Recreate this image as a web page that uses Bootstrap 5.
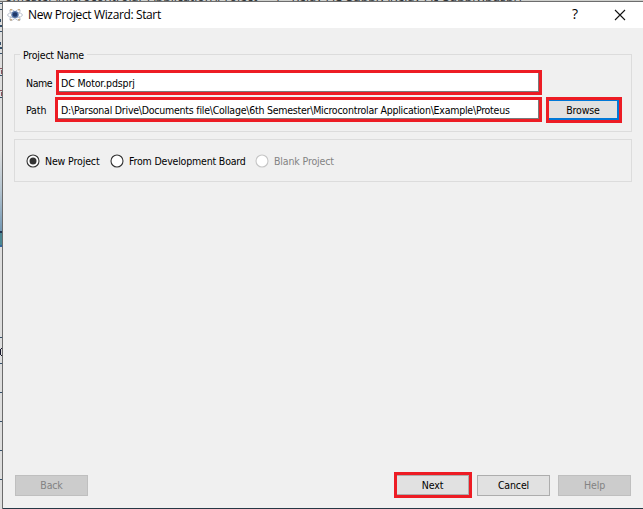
<!DOCTYPE html>
<html lang="en">
<head>
<meta charset="utf-8">
<meta name="viewport" content="width=device-width, initial-scale=1">
<title>New Project Wizard: Start</title>
<link href="https://cdn.jsdelivr.net/npm/bootstrap@5.3.0/dist/css/bootstrap.min.css" rel="stylesheet">
<style>
:root { --ui: "DejaVu Sans Condensed", "DejaVu Sans", sans-serif; --hl: #ed1c24; }
body { width: 643px; height: 509px; font: 10.5px/14px var(--ui); font-stretch: condensed; color: #000; background: #dedede; letter-spacing: -.13px; }
.backdrop-top { height: 2px; flex: none; background: #cfd0cd; border-bottom: 1px solid #6d6d6d; }
.backdrop-path { display: block; margin: -10px 0 0 5px; font: 12.4px/13px "Open Sans", sans-serif; letter-spacing: 0; color: #303438; word-spacing: 1px; }
.backdrop-left { width: 3px; flex: none; border-right: 1px solid #6b6b6b; }
.backdrop-left svg { display: block; }
.wizard { background: #f0f0f0; border-bottom: 1px solid #263845; min-width: 0; }
.titlebar { height: 26px; background: #fff; }
.title-icon { margin-left: 4px; }
.title-text { font: 12px/18px "Open Sans", sans-serif; letter-spacing: -.37px; margin-left: 5px; }
.title-help { font: 14px/18px "Open Sans", sans-serif; margin: -2px 36px 0 0; }
.title-close { margin-right: 17px; }
.group-frame { width: 618px; margin-left: 11px; border: 1px solid #dcdcdc; }
.group-name { margin-top: 26px; height: 78px; }
.group-kind { margin-top: 7px; height: 43px; padding-left: 11px; }
.group-caption { display: table; margin: -7px 0 0 5px; padding: 0 3px; background: #f0f0f0; letter-spacing: -.2px; }
.field-name { margin-top: 8px; height: 25px; }
.field-path { margin-top: 2px; height: 26px; }
.field-label { width: 41px; padding-left: 11px; flex: none; letter-spacing: -.4px; }
.path-label { width: 40px; letter-spacing: -.1px; }
.field-box { border: 3px solid var(--hl); background: #fff; height: 25px; width: 486px; line-height: 20px; padding-left: 2px; box-shadow: inset -1px -1px #7a7a7a; white-space: pre; overflow: hidden; }
.path-box { width: 487px; padding-left: 3px; letter-spacing: -.235px; }
.marked { border: 3px solid var(--hl); flex: none; }
.browse-mark { width: 76px; height: 26px; margin-left: 4px; }
.push { width: 73px; height: 21px; font: inherit; letter-spacing: inherit; line-height: 19px; padding: 0; border: 1px solid #adadad; border-radius: 0; background: #e1e1e1; color: #000; text-align: center; }
.push:disabled { background: #ccc; border-color: #bfbfbf; color: #838383; opacity: 1; }
.browse-mark .push { display: block; width: 70px; height: 20px; line-height: 18px; border-color: #0078d7; border-width: 1px 2px 2px 0; }
.next-mark { width: 78px; height: 26px; }
.next-mark .push { display: block; width: 72px; height: 20px; line-height: 18px; border-left: 0; }
.cancel-push { margin-left: 5px; }
.help-push { margin-left: 8px; }
.kind { white-space: nowrap; }
.kind svg { flex: none; margin-right: 5px; }
.kind-new { width: 84px; }
.kind-board { width: 145px; letter-spacing: -.18px; }
.kind-off { color: #838383; }
.footer-bar { height: 26px; margin: 0 12px 10px 12px; }
</style>
<script src="https://cdn.jsdelivr.net/npm/bootstrap@5.3.0/dist/js/bootstrap.bundle.min.js"></script>
</head>
<body class="d-flex flex-column overflow-hidden m-0">
<div class="backdrop-top overflow-hidden text-nowrap"><span class="backdrop-path">omester\Microcontrolar Application\Project &nbsp; &nbsp;\ &nbsp; Relay AC Supply\Relay Ac Supply.pdsprj</span></div>
<div class="d-flex flex-grow-1">
  <div class="backdrop-left overflow-hidden">
    <svg width="2" height="507" viewBox="0 2 2 507" shape-rendering="crispEdges">
      <defs><linearGradient id="sky" x1="0" y1="0" x2="0" y2="1"><stop offset="0" stop-color="#dedede"/><stop offset=".5" stop-color="#b4c4d0"/><stop offset="1" stop-color="#7398b4"/></linearGradient></defs>
      <path fill="#dedede" d="M0 2h2v507H0z"/>
      <path fill="#35506a" d="M0 3h2v1H0zM0 9h2v1H0zM0 19h1v3H0zM0 25h2v2H0zM0 31h2v1H0zM0 42h1v3H0zM0 47h2v2H0zM0 53h2v1H0z"/>
      <path fill="#8b5560" d="M0 68h2v1H0zM1 70h1v4H1zM0 90h2v1H0zM1 92h1v4H1z"/>
      <path fill="#35506a" d="M0 75h2v1H0zM0 97h2v1H0z"/>
      <path fill="url(#sky)" d="M0 150h2v81H0z"/>
      <path fill="#1f3552" d="M0 231h2v2H0z"/><path fill="#4b8793" d="M0 233h2v12H0z"/><path fill="#3567a0" d="M0 245h2v2H0z"/>
      <path fill="#35506a" d="M0 337h2v1H0zM0 363h2v1H0zM0 392h2v1H0zM0 421h2v1H0zM0 450h2v1H0zM0 479h2v1H0z"/>
      <path fill="#15152a" d="M1 348h1v1H1zM0 349h1v6H0zM1 355h1v1H1z"/>
    </svg>
  </div>
  <main class="wizard flex-grow-1 d-flex flex-column">
    <header class="titlebar d-flex align-items-center">
      <svg class="title-icon" width="16" height="14" viewBox="0 0 16 14">
        <g fill="none" stroke="#b4bccb" stroke-width=".9"><ellipse cx="8" cy="7" rx="7.4" ry="2.8"/><ellipse cx="8" cy="7" rx="7.2" ry="2.4" transform="rotate(48 8 7)"/><ellipse cx="8" cy="7" rx="7.2" ry="2.4" transform="rotate(-48 8 7)"/></g>
        <circle cx="8" cy="6.5" r="3.5" fill="#5474a8"/><circle cx="8" cy="6.5" r="2.3" fill="#1f3768"/>
        <path fill="#c9ab85" d="M3 1h2v1.5H3zM11 1h2v1.5h-2zM3 11h2v1.5H3zM11 11h2v1.5h-2z"/>
      </svg>
      <span class="title-text">New Project Wizard: Start</span>
      <span class="title-help ms-auto">?</span>
      <svg class="title-close" width="12" height="12" viewBox="0 0 12 12"><path d="M1 1l10 10M11 1L1 11" stroke="#111" stroke-width="1.1"/></svg>
    </header>
    <section class="group-frame group-name">
      <div class="group-caption"><span>Project Name</span></div>
      <div class="field-name d-flex align-items-center"><label class="field-label">Name</label><div class="field-box"><span>DC Motor.pdsprj</span></div></div>
      <div class="field-path d-flex"><label class="field-label path-label align-self-center">Path</label><div class="field-box path-box"><span>D:\Parsonal Drive\Documents file\Collage\6th Semester\Microcontrolar Application\Example\Proteus</span></div>
        <div class="marked browse-mark"><button class="push">Browse</button></div></div>
    </section>
    <section class="group-frame group-kind d-flex align-items-center">
      <label class="kind kind-new d-flex align-items-center"><svg width="14" height="14" viewBox="0 0 14 14"><circle cx="7" cy="7" r="6" fill="#fff" stroke="#333" stroke-width="1.1"/><circle cx="7" cy="7" r="3.5" fill="#333"/></svg><span>New Project</span></label>
      <label class="kind kind-board d-flex align-items-center"><svg width="14" height="14" viewBox="0 0 14 14"><circle cx="7" cy="7" r="6" fill="#fff" stroke="#333" stroke-width="1.1"/></svg><span>From Development Board</span></label>
      <label class="kind kind-off d-flex align-items-center"><svg width="14" height="14" viewBox="0 0 14 14"><circle cx="7" cy="7" r="6" fill="#fff" stroke="#c6c6c6" stroke-width="1.1"/></svg><span>Blank Project</span></label>
    </section>
    <footer class="footer-bar mt-auto d-flex align-items-center">
      <button class="push" disabled>Back</button>
      <div class="marked next-mark ms-auto"><button class="push">Next</button></div>
      <button class="push cancel-push">Cancel</button>
      <button class="push help-push" disabled>Help</button>
    </footer>
  </main>
</div>
</body>
</html>
